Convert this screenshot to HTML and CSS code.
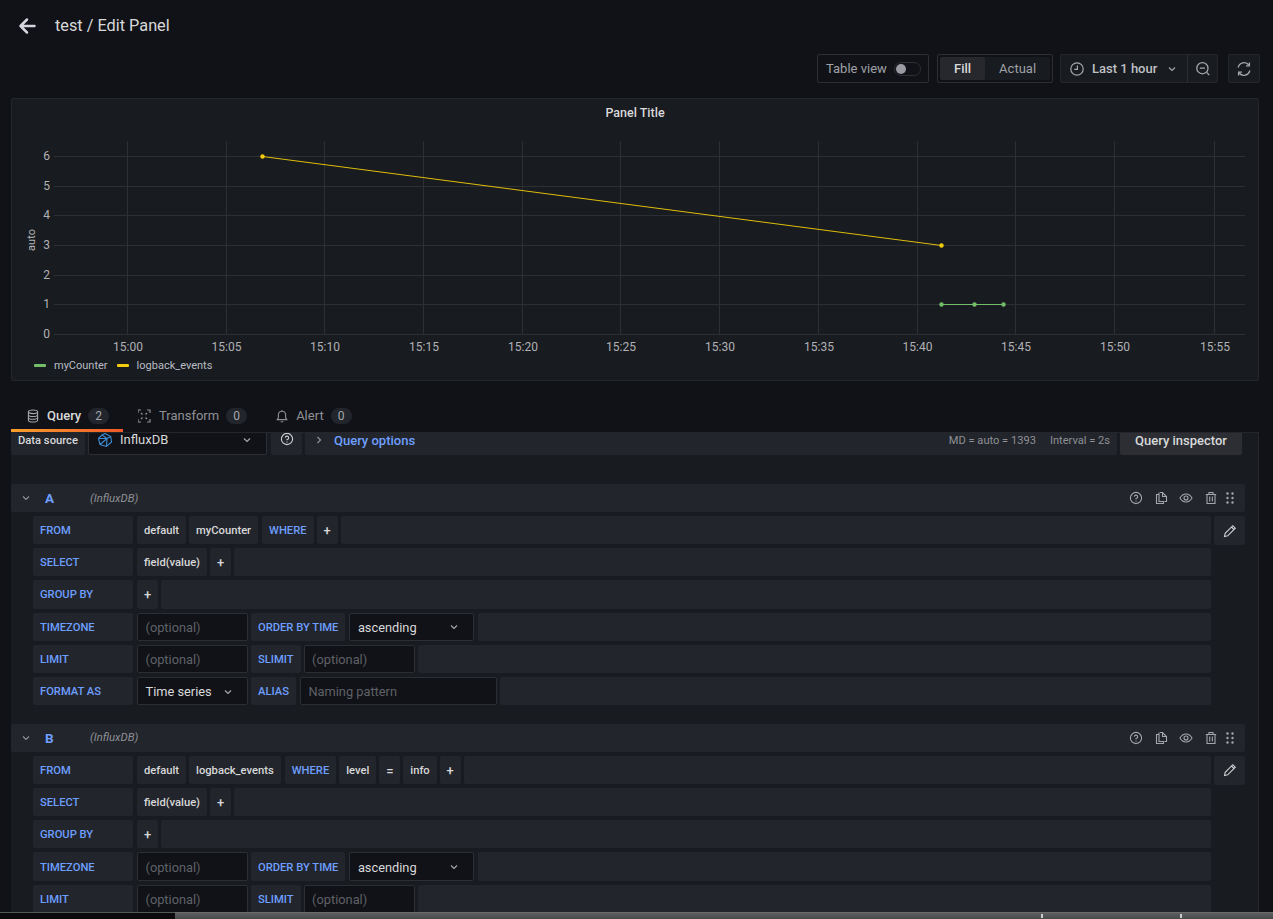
FILE: index.html
```html
<!DOCTYPE html>
<html lang="en">
<head>
<meta charset="utf-8">
<title>test / Edit Panel</title>
<link rel="stylesheet" href="styles.css">
</head>
<body>
<div class="page">
  <header class="head">
    <svg class="back" viewBox="0 0 18 18" width="18" height="18"><path d="M16.500 9H2.500M9 2.500L2.500 9L9 15.500" fill="none" stroke="#d5d5dd" stroke-width="2.500" stroke-linecap="round" stroke-linejoin="round"/></svg>
    <h1 class="title">test / Edit Panel</h1>
  </header>

  <div class="toolbar">
    <div class="tableview"><span>Table view</span><span class="switch"><i></i></span></div>
    <div class="radio"><div class="radio-in"><span class="opt on">Fill</span><span class="opt">Actual</span></div></div>
    <div class="picker">
      <div class="picker-main">
        <svg class="ic16" viewBox="0 0 16 16"><circle cx="8" cy="8" r="6.200" fill="none" stroke="#a5a7ab" stroke-width="1.200"/><path d="M8.400 4.600V8.400H5.200" fill="none" stroke="#a5a7ab" stroke-width="1.200"/></svg>
        <span class="picker-text">Last 1 hour</span>
        <svg class="chev" viewBox="0 0 10 10"><path d="M2 3.500L5 6.500L8 3.500" fill="none" stroke="#a5a7ab" stroke-width="1.200"/></svg>
      </div>
      <div class="picker-zoom">
        <svg class="ic16" viewBox="0 0 16 16"><circle cx="7.400" cy="7.200" r="5.600" fill="none" stroke="#a5a7ab" stroke-width="1.300"/><path d="M4.800 7.200H10M11.600 11.400L14.200 14" fill="none" stroke="#a5a7ab" stroke-width="1.300"/></svg>
      </div>
    </div>
    <div class="refresh">
      <svg class="ic16" viewBox="0 0 16 16"><path d="M2.200 6.500A6 6 0 0 1 12.800 4M13.800 9.500A6 6 0 0 1 3.200 12" fill="none" stroke="#a5a7ab" stroke-width="1.300"/><path d="M13.400 1.500V4.800H10M2.600 14.500V11.200H6" fill="none" stroke="#a5a7ab" stroke-width="1.300"/></svg>
    </div>
  </div>

  <section class="panel">
    <div class="panel-title">Panel Title</div>
    <svg class="chart" viewBox="0 0 1246 220" width="1246" height="220">
      <g class="grid">
        <path d="M115.500 30V223M214.500 30V223M312.500 30V223M411.500 30V223M510.500 30V223M608.500 30V223M707.500 30V223M806.500 30V223M905.500 30V223M1003.500 30V223M1102.500 30V223M1202.500 30V223"/>
        <path d="M42 45.500H1233M42 75.500H1233M42 104.500H1233M42 134.500H1233M42 164.500H1233M42 193.500H1233M42 223.500H1233"/>
      </g>
      <g class="ticks">
        <text x="38" y="49" text-anchor="end">6</text>
        <text x="38" y="79" text-anchor="end">5</text>
        <text x="38" y="108" text-anchor="end">4</text>
        <text x="38" y="138" text-anchor="end">3</text>
        <text x="38" y="168" text-anchor="end">2</text>
        <text x="38" y="197" text-anchor="end">1</text>
        <text x="38" y="227" text-anchor="end">0</text>
      </g>
      <g class="ticks" text-anchor="middle">
        <text x="116" y="240">15:00</text><text x="214.500" y="240">15:05</text><text x="313" y="240">15:10</text>
        <text x="412" y="240">15:15</text><text x="511" y="240">15:20</text><text x="609" y="240">15:25</text>
        <text x="708" y="240">15:30</text><text x="807" y="240">15:35</text><text x="905.500" y="240">15:40</text>
        <text x="1004" y="240">15:45</text><text x="1103" y="240">15:50</text><text x="1203" y="240">15:55</text>
      </g>
      <g class="ticks"><text class="axis" transform="translate(22.500 129) rotate(-90)" text-anchor="middle">auto</text></g>
      <path d="M250.500 45.500L929.500 134.500" fill="none" stroke="#e0bd0b" stroke-width="1"/>
      <path d="M929.500 193.500H991.500" fill="none" stroke="#73bf69" stroke-width="1"/>
      <g fill="#f2cc0c"><circle cx="250.500" cy="45.500" r="2.200"/><circle cx="929.500" cy="134.500" r="2.200"/></g>
      <g fill="#73bf69"><circle cx="929.500" cy="193.500" r="2.200"/><circle cx="962.500" cy="193.500" r="2.200"/><circle cx="991.500" cy="193.500" r="2.200"/></g>
    </svg>
    <div class="legend">
      <span class="leg"><i class="swatch green"></i>myCounter</span>
      <span class="leg"><i class="swatch yellow"></i>logback_events</span>
    </div>
  </section>

  <nav class="tabs">
    <div class="tab active">
      <svg class="ic14" viewBox="0 0 14 14"><ellipse cx="7" cy="2.800" rx="4.600" ry="1.800" fill="none" stroke="#a5a7ab" stroke-width="1.100"/><path d="M2.400 2.800V11.200C2.400 12.200 4.500 13 7 13S11.600 12.200 11.600 11.200V2.800M2.400 5.700C2.400 6.700 4.500 7.500 7 7.500S11.600 6.700 11.600 5.700M2.400 8.500C2.400 9.500 4.500 10.300 7 10.300S11.600 9.500 11.600 8.500" fill="none" stroke="#a5a7ab" stroke-width="1.100"/></svg>
      <span>Query</span><b class="count">2</b>
    </div>
    <div class="tab">
      <svg class="ic14" viewBox="0 0 14 14"><path d="M0 4V1H3M9 1H12V4M12 10V13H9M3 13H0V10M3 4L4.500 5.500M9 4L7.500 5.500M3 10L4.500 8.500M9 10L7.500 8.500" fill="none" stroke="#8e9095" stroke-width="1.200"/></svg>
      <span>Transform</span><b class="count">0</b>
    </div>
    <div class="tab">
      <svg class="ic14" viewBox="0 0 14 14"><path d="M2.200 10.600H11.800L10.600 8.800V5.800A3.600 3.600 0 0 0 3.400 5.800V8.800ZM5.600 12.800H8.400M7 1V2.200" fill="none" stroke="#8e9095" stroke-width="1.100"/></svg>
      <span>Alert</span><b class="count">0</b>
    </div>
  </nav>

  <main class="editor">
    <div class="ds-row">
      <div class="ds-label">Data source</div>
      <div class="ds-select">
        <svg class="ic16" viewBox="0 0 16 16"><path d="M8 1.500L13.800 4.500L14.500 10L9.500 14.500L3 12.500L1.500 6.500L5 3ZM5 3L10 6.500L9.500 14.500M10 6.500L13.800 4.500M1.500 6.500L10 6.500M3 12.500L10 6.500" fill="none" stroke="#3d8bd0" stroke-width="1.100"/></svg>
        <span class="ds-name">InfluxDB</span>
        <svg class="chev" viewBox="0 0 10 10"><path d="M2 3.500L5 6.500L8 3.500" fill="none" stroke="#a5a7ab" stroke-width="1.200"/></svg>
      </div>
      <div class="ds-help">
        <svg class="ic14" viewBox="0 0 14 14"><circle cx="7" cy="7" r="5.600" fill="none" stroke="#d0d1d3" stroke-width="1.100"/><path d="M5.300 5.600A1.700 1.700 0 1 1 7 7.500V8.300M7 9.600V10.500" fill="none" stroke="#d0d1d3" stroke-width="1.100"/></svg>
      </div>
      <div class="ds-options">
        <svg class="chev-r" viewBox="0 0 10 10"><path d="M3.500 2L6.500 5L3.500 8" fill="none" stroke="#8e9095" stroke-width="1.200"/></svg>
        <span class="ds-opt-title">Query options</span>
        <span class="ds-meta">MD = auto = 1393</span>
        <span class="ds-meta ds-int">Interval = 2s</span>
      </div>
      <div class="ds-inspect">Query inspector</div>
    </div>

    <section class="query">
      <div class="q-head">
        <svg class="chev-q" viewBox="0 0 10 10"><path d="M2 3.500L5 6.500L8 3.500" fill="none" stroke="#8e9095" stroke-width="1.200"/></svg>
        <span class="q-letter">A</span>
        <em class="q-src">(InfluxDB)</em>
        <div class="q-actions">
          <svg class="ic14" viewBox="0 0 14 14"><circle cx="7" cy="7" r="5.600" fill="none" stroke="#a5a7ab" stroke-width="1.100"/><path d="M5.300 5.600A1.700 1.700 0 1 1 7 7.500V8.300M7 9.600V10.500" fill="none" stroke="#a5a7ab" stroke-width="1.100"/></svg>
          <svg class="ic14" viewBox="0 0 14 14"><path d="M6 1.500H8.500L12.500 5.500V10.500H10.500M5 3.500H2.500V12.500H9.500V10.500H5ZM5 1.500V10.500M8.500 1.500V5.500H12.500" fill="none" stroke="#a5a7ab" stroke-width="1.100"/></svg>
          <svg class="ic14" viewBox="0 0 14 14"><path d="M1 7C2.500 4.300 4.500 3 7 3S11.500 4.300 13 7C11.500 9.700 9.500 11 7 11S2.500 9.700 1 7Z" fill="none" stroke="#a5a7ab" stroke-width="1.100"/><circle cx="7" cy="7" r="2" fill="none" stroke="#a5a7ab" stroke-width="1.100"/></svg>
          <svg class="ic14" viewBox="0 0 14 14"><path d="M1.800 3.500H12.200M5 3.500V1.500H9V3.500M3 3.500V12.500H11V3.500M5.700 5.500V10.500M8.300 5.500V10.500" fill="none" stroke="#a5a7ab" stroke-width="1.100"/></svg>
          <svg class="grip" viewBox="0 0 10 14"><g fill="#a5a7ab"><circle cx="2.500" cy="2.500" r="1.200"/><circle cx="7.500" cy="2.500" r="1.200"/><circle cx="2.500" cy="7" r="1.200"/><circle cx="7.500" cy="7" r="1.200"/><circle cx="2.500" cy="11.500" r="1.200"/><circle cx="7.500" cy="11.500" r="1.200"/></g></svg>
        </div>
      </div>
      <div class="q-body">
        <div class="q-rows">
          <div class="row"><span class="lab w100">FROM</span><span class="seg">default</span><span class="seg">myCounter</span><span class="kw">WHERE</span><span class="plus">+</span><span class="fill"></span></div>
          <div class="row"><span class="lab w100">SELECT</span><span class="seg">field(value)</span><span class="plus">+</span><span class="fill"></span></div>
          <div class="row"><span class="lab w100">GROUP BY</span><span class="plus">+</span><span class="fill"></span></div>
          <div class="row"><span class="lab w100">TIMEZONE</span><span class="inp w111">(optional)</span><span class="lab">ORDER BY TIME</span><span class="sel w125">ascending<svg class="chev" viewBox="0 0 10 10"><path d="M2 3.500L5 6.500L8 3.500" fill="none" stroke="#a5a7ab" stroke-width="1.200"/></svg></span><span class="fill"></span></div>
          <div class="row"><span class="lab w100">LIMIT</span><span class="inp w111">(optional)</span><span class="lab">SLIMIT</span><span class="inp w111">(optional)</span><span class="fill"></span></div>
          <div class="row"><span class="lab w100">FORMAT AS</span><span class="sel w111">Time series<svg class="chev" viewBox="0 0 10 10"><path d="M2 3.500L5 6.500L8 3.500" fill="none" stroke="#a5a7ab" stroke-width="1.200"/></svg></span><span class="lab">ALIAS</span><span class="inp w197">Naming pattern</span><span class="fill"></span></div>
        </div>
        <div class="edit"><svg class="ic14" viewBox="0 0 14 14"><path d="M1.500 12.500L2.200 9.300L9.800 1.700L12.300 4.200L4.700 11.800ZM8.500 3L11 5.500" fill="none" stroke="#d0d1d3" stroke-width="1.100"/></svg></div>
      </div>
    </section>

    <section class="query">
      <div class="q-head">
        <svg class="chev-q" viewBox="0 0 10 10"><path d="M2 3.500L5 6.500L8 3.500" fill="none" stroke="#8e9095" stroke-width="1.200"/></svg>
        <span class="q-letter">B</span>
        <em class="q-src">(InfluxDB)</em>
        <div class="q-actions">
          <svg class="ic14" viewBox="0 0 14 14"><circle cx="7" cy="7" r="5.600" fill="none" stroke="#a5a7ab" stroke-width="1.100"/><path d="M5.300 5.600A1.700 1.700 0 1 1 7 7.500V8.300M7 9.600V10.500" fill="none" stroke="#a5a7ab" stroke-width="1.100"/></svg>
          <svg class="ic14" viewBox="0 0 14 14"><path d="M6 1.500H8.500L12.500 5.500V10.500H10.500M5 3.500H2.500V12.500H9.500V10.500H5ZM5 1.500V10.500M8.500 1.500V5.500H12.500" fill="none" stroke="#a5a7ab" stroke-width="1.100"/></svg>
          <svg class="ic14" viewBox="0 0 14 14"><path d="M1 7C2.500 4.300 4.500 3 7 3S11.500 4.300 13 7C11.500 9.700 9.500 11 7 11S2.500 9.700 1 7Z" fill="none" stroke="#a5a7ab" stroke-width="1.100"/><circle cx="7" cy="7" r="2" fill="none" stroke="#a5a7ab" stroke-width="1.100"/></svg>
          <svg class="ic14" viewBox="0 0 14 14"><path d="M1.800 3.500H12.200M5 3.500V1.500H9V3.500M3 3.500V12.500H11V3.500M5.700 5.500V10.500M8.300 5.500V10.500" fill="none" stroke="#a5a7ab" stroke-width="1.100"/></svg>
          <svg class="grip" viewBox="0 0 10 14"><g fill="#a5a7ab"><circle cx="2.500" cy="2.500" r="1.200"/><circle cx="7.500" cy="2.500" r="1.200"/><circle cx="2.500" cy="7" r="1.200"/><circle cx="7.500" cy="7" r="1.200"/><circle cx="2.500" cy="11.500" r="1.200"/><circle cx="7.500" cy="11.500" r="1.200"/></g></svg>
        </div>
      </div>
      <div class="q-body">
        <div class="q-rows">
          <div class="row"><span class="lab w100">FROM</span><span class="seg">default</span><span class="seg">logback_events</span><span class="kw">WHERE</span><span class="seg">level</span><span class="plus">=</span><span class="seg">info</span><span class="plus">+</span><span class="fill"></span></div>
          <div class="row"><span class="lab w100">SELECT</span><span class="seg">field(value)</span><span class="plus">+</span><span class="fill"></span></div>
          <div class="row"><span class="lab w100">GROUP BY</span><span class="plus">+</span><span class="fill"></span></div>
          <div class="row"><span class="lab w100">TIMEZONE</span><span class="inp w111">(optional)</span><span class="lab">ORDER BY TIME</span><span class="sel w125">ascending<svg class="chev" viewBox="0 0 10 10"><path d="M2 3.500L5 6.500L8 3.500" fill="none" stroke="#a5a7ab" stroke-width="1.200"/></svg></span><span class="fill"></span></div>
          <div class="row"><span class="lab w100">LIMIT</span><span class="inp w111">(optional)</span><span class="lab">SLIMIT</span><span class="inp w111">(optional)</span><span class="fill"></span></div>
        </div>
        <div class="edit"><svg class="ic14" viewBox="0 0 14 14"><path d="M1.500 12.500L2.200 9.300L9.800 1.700L12.300 4.200L4.700 11.800ZM8.500 3L11 5.500" fill="none" stroke="#d0d1d3" stroke-width="1.100"/></svg></div>
      </div>
    </section>
  </main>

  <div class="taskbar"><span class="task-dark"></span><span class="task-tick t1"></span><span class="task-tick t2"></span></div>
</div>
</body>
</html>
```
FILE: styles.css
```css
* { box-sizing: border-box; }
html, body { margin: 0; height: 100%; overflow: hidden; background: #111217; }
body { font-family: Roboto, "Liberation Sans", sans-serif; font-size: 13px; color: #ccccdc; }

.page { position: relative; width: 1273px; height: 919px; overflow: hidden; display: flex; flex-direction: column; }

.head { display: flex; align-items: center; height: 50px; padding: 2px 0 0 18px; flex: none; }
.back { flex: none; }
.title { margin: 0 0 0 19px; font-size: 16.300px; font-weight: 400; color: #d8d9da; line-height: 48px; }

.toolbar { display: flex; justify-content: flex-end; align-items: stretch; height: 29px; margin-top: 4px; padding-right: 13px; flex: none; }
.tableview { display: flex; align-items: center; gap: 7px; width: 112px; padding-left: 8px; border: 1px solid #2c2e33; border-radius: 2px; color: #9fa1a6; }
.switch { display: block; width: 27px; height: 14px; border: 1px solid #2c2e33; border-radius: 7px; position: relative; }
.switch i { position: absolute; left: 1px; top: 1px; width: 10px; height: 10px; border-radius: 50%; background: #9a9aa4; }
.radio { width: 116px; margin-left: 8px; padding: 2px; border: 1px solid #2c2e33; border-radius: 2px; }
.radio-in { display: flex; height: 23px; background: #181b1f; border-radius: 2px; }
.opt { display: flex; align-items: center; justify-content: center; color: #9fa1a6; width: 66px; }
.opt.on { width: 46px; background: #26282e; color: #d8d9da; font-weight: 500; border-radius: 2px; }
.picker { display: flex; margin-left: 7px; background: #181b1f; border: 1px solid #24262b; border-radius: 2px; }
.picker-main { display: flex; align-items: center; width: 127px; padding-left: 8px; border-right: 1px solid #2c2e33; }
.picker-text { margin-left: 7px; font-weight: 500; color: #bfc0c4; white-space: nowrap; }
.picker-main .chev { margin-left: 10px; }
.picker-zoom { display: flex; align-items: center; justify-content: center; width: 29px; }
.refresh { display: flex; align-items: center; justify-content: center; width: 32px; margin-left: 10px; background: #181b1f; border: 1px solid #24262b; border-radius: 2px; }
.ic16 { width: 16px; height: 16px; flex: none; display: block; }
.ic14 { width: 14px; height: 14px; flex: none; display: block; }
.chev { width: 10px; height: 10px; flex: none; display: block; }

.panel { width: 1248px; height: 283px; margin: 15px 0 0 11px; padding: 0; background: #181b1f; border: 1px solid #24262b; border-radius: 2px; flex: none; }
.panel-title { height: 30px; line-height: 28px; text-align: center; font-size: 12.500px; font-weight: 500; color: #d8d9da; }
.chart { display: block; width: 1246px; height: 220px; overflow: visible; margin-top: -18px; margin-bottom: 28px; }
.grid path { fill: none; stroke: #2c2f34; stroke-width: 1; }
.ticks text { font-family: Roboto, "Liberation Sans", sans-serif; font-size: 12px; fill: #b0b1b5; }
.ticks .axis { font-size: 11px; }
.legend { display: flex; gap: 9px; padding-left: 22px; font-size: 11px; color: #b8bcc4; }
.leg { display: flex; align-items: center; white-space: nowrap; }
.swatch { display: block; width: 12px; height: 2.500px; margin-right: 8px; border-radius: 1px; }
.green { background: #73bf69; }
.yellow { background: #f2cc0c; }

.tabs { display: flex; height: 29px; margin: 22px 0 0 11px; flex: none; }
.tab { display: flex; align-items: center; gap: 7px; padding: 0 0 4px 15px; height: 29px; color: #8e9095; position: relative; }
.tab.active { color: #d8d9da; font-weight: 500; width: 112px; }
.tab.active::after { content: ""; position: absolute; left: 0; right: 0; bottom: 0; height: 3px; background: linear-gradient(90deg, #f99f2d, #f05a28); }
.tab + .tab { margin-right: 13px; }
.count { display: flex; align-items: center; justify-content: center; width: 21px; height: 16px; border-radius: 8px; background: #22252b; font-weight: 400; font-size: 12px; color: #a5a7ab; }

.editor { width: 1248px; margin-left: 11px; flex: 1; min-height: 0; background: #181b1f; border-top: 1px solid #24262b; border-right: 1px solid #24262b; overflow: hidden; }

.ds-row { display: flex; height: 32px; margin-top: -10px; margin-bottom: 29px; }
.ds-label { width: 74px; padding: 11px 0 0 7px; background: #22252b; border-radius: 2px; font-size: 11.200px; font-weight: 500; color: #d8d9da; }
.ds-select { display: flex; align-items: center; width: 179px; margin-left: 3px; padding: 1px 14px 0 8px; background: #111217; border: 1px solid #2c2e33; border-radius: 2px; }
.ds-name { flex: 1; margin-left: 7px; color: #d8d9da; }
.ds-help { display: flex; align-items: center; justify-content: center; width: 31px; margin-left: 4px; background: #22252b; border-radius: 2px; }
.ds-options { display: flex; align-items: center; width: 812px; margin-left: 3px; padding: 2px 7px 0 9px; background: #22252b; border-radius: 2px; font-size: 11.100px; color: #8e9095; }
.chev-r { width: 10px; height: 10px; flex: none; }
.ds-opt-title { margin-left: 10px; margin-right: auto; font-size: 13px; font-weight: 500; color: #6e9fff; }
.ds-int { margin-left: 14px; }
.ds-inspect { display: flex; align-items: center; justify-content: center; width: 122px; margin-left: 3px; background: #2c2e33; border-radius: 2px; font-weight: 500; color: #d8d9da; padding-top: 2px; }

.query { width: 1234px; margin-bottom: 18.800px; }
.q-head { display: flex; align-items: center; height: 28px; padding-left: 10px; background: #22252b; border-radius: 2px; }
.chev-q { width: 10px; height: 10px; flex: none; }
.q-letter { width: 45px; margin-left: 14px; font-size: 13.500px; font-weight: 700; color: #6e9fff; }
.q-src { font-size: 11.300px; color: #8e9095; }
.q-actions { display: flex; align-items: center; margin-left: auto; gap: 11px; padding-right: 10px; }
.grip { width: 10px; height: 14px; display: block; margin-left: -4px; }

.q-body { display: flex; gap: 3px; padding: 4px 0 0 22px; }
.q-rows { width: 1178px; flex: none; }
.row { display: flex; gap: 3px; height: 28.200px; margin-bottom: 4px; font-size: 11.200px; font-weight: 500; }
.row:last-child { margin-bottom: 0; }
.row > span { display: flex; align-items: center; border-radius: 2px; white-space: nowrap; padding-top: 1px; }
.lab { padding: 0 7px; background: #22252b; color: #6e9fff; }
.w100 { width: 100px; flex: none; margin-right: 1px; }
.seg { padding: 0 7px; background: #22252b; color: #d8d9da; }
.kw { padding: 0 7px; background: #22252b; color: #6e9fff; margin-left: 1px; }
.plus { width: 21px; justify-content: center; background: #22252b; color: #d8d9da; font-size: 13px; }
.fill { flex: 1; background: #22252b; }
.inp { padding: 0 7.500px; background: #111217; border: 1px solid #2c2e33; font-size: 12.800px; font-weight: 400; color: #5f6167; }
.sel { justify-content: space-between; padding: 0 14px 0 7.500px; background: #111217; border: 1px solid #2c2e33; font-size: 12.800px; font-weight: 400; color: #d8d9da; margin-left: 1px; margin-right: 1px; }
.w100 + .sel { margin-left: 0; margin-right: 0; }
.w111 { width: 111px; flex: none; }
.w125 { width: 125px; flex: none; }
.w197 { width: 197px; flex: none; margin-left: 1px; }
.edit { display: flex; align-items: center; justify-content: center; width: 31px; height: 29px; background: #22252b; border-radius: 2px; flex: none; }

.taskbar { position: absolute; left: 0; right: 0; bottom: 0; height: 7px; background: linear-gradient(#5c5e60, #46494b); border-top: 1px solid #6a6c6e; }
.task-dark { position: absolute; left: 0; top: -1px; bottom: 0; width: 175px; background: #0b0b0d; border-top: 1px solid #55585a; }
.task-tick { position: absolute; top: 1px; width: 2px; height: 4px; background: #c9cacb; }
.t1 { left: 1041px; }
.t2 { left: 1180px; }
```
